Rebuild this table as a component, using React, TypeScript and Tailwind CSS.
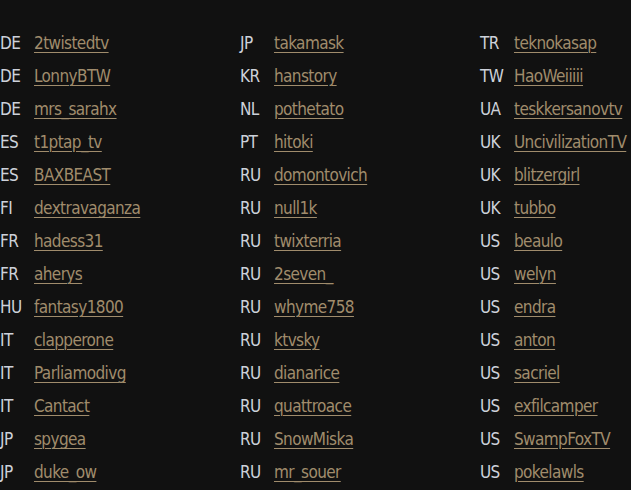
import React from 'react';

type Entry = [string, string];

const columns: Entry[][] = [
  [
    ['DE', '2twistedtv'],
    ['DE', 'LonnyBTW'],
    ['DE', 'mrs_sarahx'],
    ['ES', 't1ptap_tv'],
    ['ES', 'BAXBEAST'],
    ['FI', 'dextravaganza'],
    ['FR', 'hadess31'],
    ['FR', 'aherys'],
    ['HU', 'fantasy1800'],
    ['IT', 'clapperone'],
    ['IT', 'Parliamodivg'],
    ['IT', 'Cantact'],
    ['JP', 'spygea'],
    ['JP', 'duke_ow'],
  ],
  [
    ['JP', 'takamask'],
    ['KR', 'hanstory'],
    ['NL', 'pothetato'],
    ['PT', 'hitoki'],
    ['RU', 'domontovich'],
    ['RU', 'null1k'],
    ['RU', 'twixterria'],
    ['RU', '2seven_'],
    ['RU', 'whyme758'],
    ['RU', 'ktvsky'],
    ['RU', 'dianarice'],
    ['RU', 'quattroace'],
    ['RU', 'SnowMiska'],
    ['RU', 'mr_souer'],
  ],
  [
    ['TR', 'teknokasap'],
    ['TW', 'HaoWeiiiii'],
    ['UA', 'teskkersanovtv'],
    ['UK', 'UncivilizationTV'],
    ['UK', 'blitzergirl'],
    ['UK', 'tubbo'],
    ['US', 'beaulo'],
    ['US', 'welyn'],
    ['US', 'endra'],
    ['US', 'anton'],
    ['US', 'sacriel'],
    ['US', 'exfilcamper'],
    ['US', 'SwampFoxTV'],
    ['US', 'pokelawls'],
  ],
];

export default function App() {
  return (
    <div className="w-[631px] h-[490px] overflow-hidden bg-[#111111] font-['DejaVu_Sans_Condensed','Liberation_Sans',sans-serif] text-[17px] tracking-[-0.6px]">
      <div className="flex pt-[27px]">
        {columns.map((col, ci) => (
          <ul key={ci} className="w-[240px] shrink-0 flex flex-col">
            {col.map(([code, name], i) => (
              <li key={i} className="flex items-center h-[33px] leading-none">
                <span className="w-[34px] shrink-0 text-[#cdd1da]">{code}</span>
                <a
                  href="#"
                  className="text-[#a08c6c] underline underline-offset-[3px] decoration-1 decoration-[#a08c6c]"
                >
                  {name}
                </a>
              </li>
            ))}
          </ul>
        ))}
      </div>
    </div>
  );
}
